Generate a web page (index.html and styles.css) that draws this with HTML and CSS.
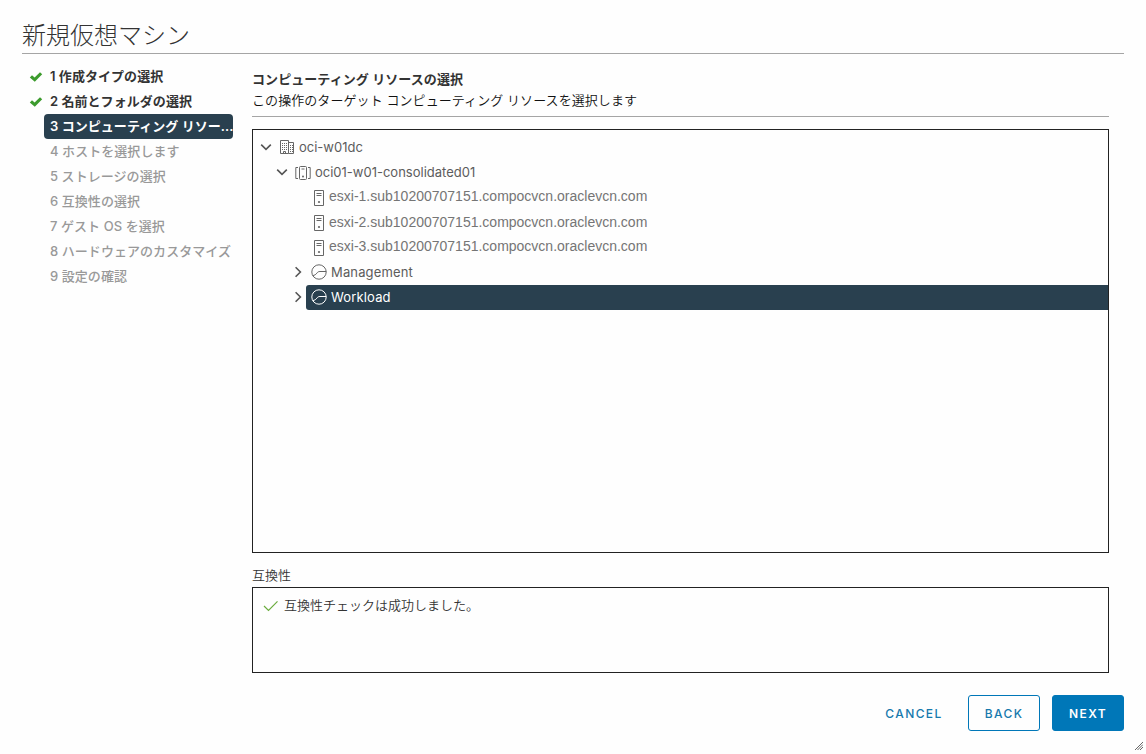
FILE: index.html
```html
<!DOCTYPE html>
<html lang="ja">
<head>
    <meta charset="UTF-8">
    <meta name="viewport" content="width=device-width, initial-scale=1.0">
    <title>新規仮想マシン</title>
    <link rel="stylesheet" href="styles.css">
</head>
<body>
    <!-- shared icons -->
    <svg class="defs" width="0" height="0">
        <symbol id="check" viewBox="0 0 14 12"><path d="M.8 6.400 3 4.200 5.600 6.500 11 1.200 13.200 3.200 5.800 10.800Z"/></symbol>
        <symbol id="down" viewBox="0 0 12 12"><path d="M1.200 3.600 6 8.400 10.800 3.600"/></symbol>
        <symbol id="right" viewBox="0 0 12 12"><path d="M3.600 1.200 8.400 6 3.600 10.800"/></symbol>
        <symbol id="datacenter" viewBox="0 0 16 16">
            <path d="M1.500 14.500V1.500H9.500V14.500ZM9.500 3.500H14.500V14.500H9.500M4.500 14.500V12.500H6.500V14.500"/>
            <path class="dots" d="M3 4.500H8M3 6.500H8M3 8.500H8M3 10.500H8M11 6.500H14M11 8.500H14M11 10.500H14M11 12.500H14"/>
        </symbol>
        <symbol id="cluster" viewBox="0 0 16 16">
            <rect x="4.500" y="1.500" width="7" height="13" rx="1"/>
            <path d="M6.500 4H9.500M3 2.500H.8V13.500H3M13 2.500H15.200V13.500H13"/>
            <circle class="dot" cx="8" cy="11.500" r="1"/>
        </symbol>
        <symbol id="host" viewBox="0 0 16 16">
            <path d="M3.500 .5H12.500V15.500H3.500ZM5.500 3.500H10.500M5.500 5.500H10.500"/>
            <circle class="dot" cx="8" cy="12" r="1.100"/>
        </symbol>
        <symbol id="pool" viewBox="0 0 16 16">
            <circle cx="8" cy="8" r="7.200"/>
            <path d="M1.600 11.600C3.800 11.300 4.900 10.500 5.900 9.100 6.800 7.900 7.600 7.500 9 7.500H15.200"/>
        </symbol>
    </svg>

    <div class="wizard">
        <h1>新規仮想マシン</h1>

        <div class="content">
            <ol class="steps">
                <li class="done"><svg class="check"><use href="#check"/></svg><span>1 作成タイプの選択</span></li>
                <li class="done"><svg class="check"><use href="#check"/></svg><span>2 名前とフォルダの選択</span></li>
                <li class="active"><span>3 コンピューティング リソー...</span></li>
                <li><span>4 ホストを選択します</span></li>
                <li><span>5 ストレージの選択</span></li>
                <li><span>6 互換性の選択</span></li>
                <li><span>7 ゲスト OS を選択</span></li>
                <li><span>8 ハードウェアのカスタマイズ</span></li>
                <li><span>9 設定の確認</span></li>
            </ol>

            <main>
                <div class="page-title">
                    <h2>コンピューティング リソースの選択</h2>
                    <p>この操作のターゲット コンピューティング リソースを選択します</p>
                </div>

                <div class="tree">
                    <div class="node level1"><svg class="caret"><use href="#down"/></svg><div class="item"><svg class="icon"><use href="#datacenter"/></svg><span>oci-w01dc</span></div></div>
                    <div class="node level2"><svg class="caret"><use href="#down"/></svg><div class="item"><svg class="icon"><use href="#cluster"/></svg><span>oci01-w01-consolidated01</span></div></div>
                    <div class="node host"><div class="item"><svg class="icon"><use href="#host"/></svg><span class="raised">esxi-1.sub10200707151.compocvcn.oraclevcn.com</span></div></div>
                    <div class="node host"><div class="item"><svg class="icon"><use href="#host"/></svg><span>esxi-2.sub10200707151.compocvcn.oraclevcn.com</span></div></div>
                    <div class="node host"><div class="item"><svg class="icon"><use href="#host"/></svg><span class="raised">esxi-3.sub10200707151.compocvcn.oraclevcn.com</span></div></div>
                    <div class="node level3"><svg class="caret"><use href="#right"/></svg><div class="item"><svg class="icon"><use href="#pool"/></svg><span>Management</span></div></div>
                    <div class="node level3"><svg class="caret"><use href="#right"/></svg><div class="item selected"><svg class="icon"><use href="#pool"/></svg><span>Workload</span></div></div>
                </div>

                <label class="compat-label">互換性</label>
                <div class="compat">
                    <svg class="ok" viewBox="0 0 16 12"><path d="M1 6 5.500 10.500 14.500 1.300"/></svg>
                    <span>互換性チェックは成功しました。</span>
                </div>
            </main>
        </div>

        <footer>
            <button type="button" class="btn link">CANCEL</button>
            <button type="button" class="btn outline">BACK</button>
            <button type="button" class="btn primary">NEXT</button>
        </footer>
        <svg class="grip" viewBox="0 0 8 8"><path d="M0 8 8 0M2.500 8 8 2.500M5 8 8 5"/></svg>
    </div>
</body>
</html>
```
FILE: styles.css
```css
* {
    box-sizing: border-box;
}
body {
    margin: 0;
    background: #fefefe;
    color: #333;
    font-family: Inter, "Noto Sans CJK JP", sans-serif;
    font-size: 13px;
}
.defs {
    display: block;
}
svg {
    flex: none;
    fill: none;
    stroke: #666;
}
.wizard {
    position: relative;
    height: 754px;
    padding: 16px 22px 0;
    overflow: hidden;
}
h1 {
    height: 38px;
    margin: 0;
    border-bottom: 1px solid #a5a5a5;
    font-size: 24px;
    font-weight: 300;
    line-height: 39px;
    white-space: nowrap;
}
.content {
    display: flex;
    gap: 19px;
    height: 641px;
}
.steps {
    width: 211px;
    margin: 0;
    padding: 10px 0 0;
    list-style: none;
}
.steps li {
    display: flex;
    align-items: center;
    height: 25px;
    padding-left: 28px;
    color: #999;
    font-weight: 500;
    line-height: 25px;
    letter-spacing: 0.05px;
    white-space: nowrap;
}
.steps .done {
    padding-left: 7px;
    color: #333;
    font-weight: 600;
}
.check {
    width: 14px;
    height: 12px;
    margin-right: 7px;
    fill: #3c9b2d;
    stroke: none;
}
.steps .active {
    margin-left: 22px;
    padding: 0 0 0 6px;
    border-radius: 4px;
    background: #29404f;
    color: #fff;
    font-weight: 600;
}
main {
    width: 857px;
}
.page-title {
    height: 63px;
    padding-top: 15px;
    border-bottom: 1px solid #a5a5a5;
}
h2, .page-title p {
    margin: 0;
    font-size: 13px;
    line-height: 21px;
    letter-spacing: 0.07px;
}
h2 {
    font-weight: 600;
}
.page-title p {
    color: #111;
    font-weight: 350;
}
.tree {
    height: 424px;
    margin-top: 12px;
    padding-top: 5px;
    border: 1px solid #222;
}
.node {
    display: flex;
    align-items: center;
    height: 25px;
    color: #5c5c5c;
}
.node span {
    padding-bottom: 2px;
}
.node .raised {
    padding-bottom: 4px;
}
.level1 {
    padding-left: 7px;
}
.level2 {
    padding-left: 23px;
}
.level3 {
    padding-left: 39px;
    letter-spacing: 0.15px;
}
.host {
    padding-left: 53px;
    color: #757575;
    font-family: "Liberation Sans", Arial, sans-serif;
    font-size: 14px;
}
.caret {
    width: 12px;
    height: 12px;
    margin-bottom: 2px;
    stroke: #555;
    stroke-width: 1.6;
}
.item {
    display: flex;
    flex: 1;
    align-items: center;
    height: 25px;
    margin-left: 2px;
    padding-left: 5px;
    border-radius: 3px 0 0 3px;
}
.host .item {
    margin: 0;
}
.icon {
    width: 16px;
    height: 16px;
    margin-right: 4px;
}
.level1 .icon,
.level3 .icon {
    margin-bottom: 1px;
}
.host .icon {
    margin-right: 2px;
}
.dots {
    stroke-dasharray: 1 1;
}
.dot {
    fill: #666;
    stroke: none;
}
.selected {
    background: #29404f;
    color: #fff;
}
.selected .icon {
    stroke: #fff;
}
.compat-label {
    display: block;
    height: 34px;
    padding-top: 12px;
    font-weight: 350;
    line-height: 20px;
}
.compat {
    display: flex;
    height: 86px;
    padding: 7px 11px;
    border: 1px solid #222;
    font-weight: 350;
    line-height: 20px;
}
.ok {
    width: 16px;
    height: 12px;
    margin: 5px 4px 0 -1px;
    stroke: #6bac3e;
    stroke-width: 1.2;
}
.compat span {
    padding-left: 1px;
}
footer {
    display: flex;
    justify-content: flex-end;
    gap: 12px;
}
.btn {
    width: 72px;
    height: 36px;
    padding: 0;
    border: 1px solid #0077b8;
    border-radius: 3px;
    background: none;
    color: #1679ad;
    font: 500 12px Inter, sans-serif;
    letter-spacing: 1.4px;
}
.link {
    width: 84px;
    border-color: transparent;
}
.primary {
    background: #0077b8;
    color: #fff;
    font-weight: 600;
}
.grip {
    position: absolute;
    right: 3px;
    bottom: 4px;
    width: 8px;
    height: 8px;
}
```
